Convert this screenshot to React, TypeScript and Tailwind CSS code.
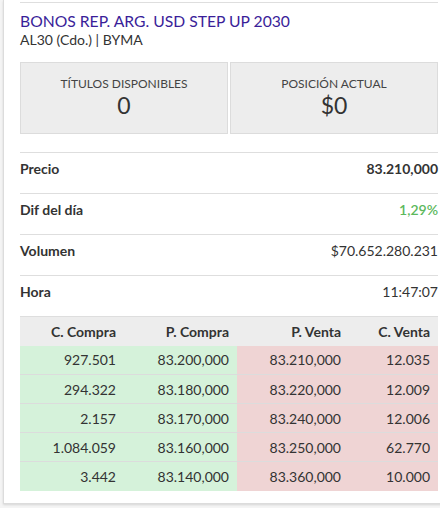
import React from 'react';

const rows = [
  { label: 'Precio', value: '83.210,000', cls: 'font-bold text-[#333]' },
  { label: 'Dif del día', value: '1,29%', cls: 'font-semibold text-[#5cb85c]' },
  { label: 'Volumen', value: '$70.652.280.231', cls: 'text-[#333]' },
  { label: 'Hora', value: '11:47:07', cls: 'text-[#333]' },
];

const book = [
  ['927.501', '83.200,000', '83.210,000', '12.035'],
  ['294.322', '83.180,000', '83.220,000', '12.009'],
  ['2.157', '83.170,000', '83.240,000', '12.006'],
  ['1.084.059', '83.160,000', '83.250,000', '62.770'],
  ['3.442', '83.140,000', '83.360,000', '10.000'],
];

export default function App() {
  return (
    <div
      className="w-[440px] h-[508px] overflow-hidden bg-[#f4f4f4]"
      style={{ fontFamily: 'Lato, "Open Sans", sans-serif' }}
    >
      <div className="ml-[3px] w-[450px] h-[504px] bg-white border-l border-b border-[#dcdcdc] shadow-[0_1px_2px_rgba(0,0,0,0.12)] px-4 pt-[2px]">
        <div className="w-[418px]">
          <div className="border-t border-[#dedede] pt-[9px]">
            <h1 className="text-[15.7px] leading-[19px] text-[#3a1e99]">BONOS REP. ARG. USD STEP UP 2030</h1>
            <p className="text-[14px] leading-[17px] text-[#333]">AL30 (Cdo.) | BYMA</p>
          </div>

          {/* saldo y posición */}
          <div className="mt-[14px] flex gap-[2px]">
            <div className="flex-1 h-[72px] bg-[#ededed] border border-[#dcdcdc] flex flex-col items-center pt-[14px]">
              <span className="text-[12px] leading-[14px] text-[#444]">TÍTULOS DISPONIBLES</span>
              <span className="text-[23px] leading-[28px] text-[#333]">0</span>
            </div>
            <div className="flex-1 h-[72px] bg-[#ededed] border border-[#dcdcdc] flex flex-col items-center pt-[14px]">
              <span className="text-[12px] leading-[14px] text-[#444]">POSICIÓN ACTUAL</span>
              <span className="text-[23px] leading-[28px] text-[#333]">$0</span>
            </div>
          </div>

          <div className="mt-[18px]">
            {rows.map((r) => (
              <div
                key={r.label}
                className="h-[41px] border-t border-[#dedede] flex items-start justify-between pt-[7px] text-[14px] leading-[17px]"
              >
                <span className="font-bold text-[#333]">{r.label}</span>
                <span className={r.cls}>{r.value}</span>
              </div>
            ))}
          </div>

          {/* puntas */}
          <table className="w-full border-t border-[#dedede] text-[14px] text-[#333] border-collapse">
            <thead>
              <tr className="bg-[#ededed] h-[29px]">
                <th className="w-[104px] text-right pr-2 font-bold">C. Compra</th>
                <th className="w-[113px] text-right pr-2 font-bold">P. Compra</th>
                <th className="w-[112px] text-right pr-2 font-bold">P. Venta</th>
                <th className="text-right pr-2 font-bold">C. Venta</th>
              </tr>
            </thead>
            <tbody>
              {book.map((b, i) => (
                <tr key={i} className={`h-[29px] ${i > 0 ? 'border-t border-[#dcdcdc]' : ''}`}>
                  <td className="bg-[#d5f2da] text-right pr-2">{b[0]}</td>
                  <td className="bg-[#d5f2da] text-right pr-2">{b[1]}</td>
                  <td className="bg-[#efd4d4] text-right pr-2">{b[2]}</td>
                  <td className="bg-[#efd4d4] text-right pr-2">{b[3]}</td>
                </tr>
              ))}
            </tbody>
          </table>
        </div>
      </div>
    </div>
  );
}
